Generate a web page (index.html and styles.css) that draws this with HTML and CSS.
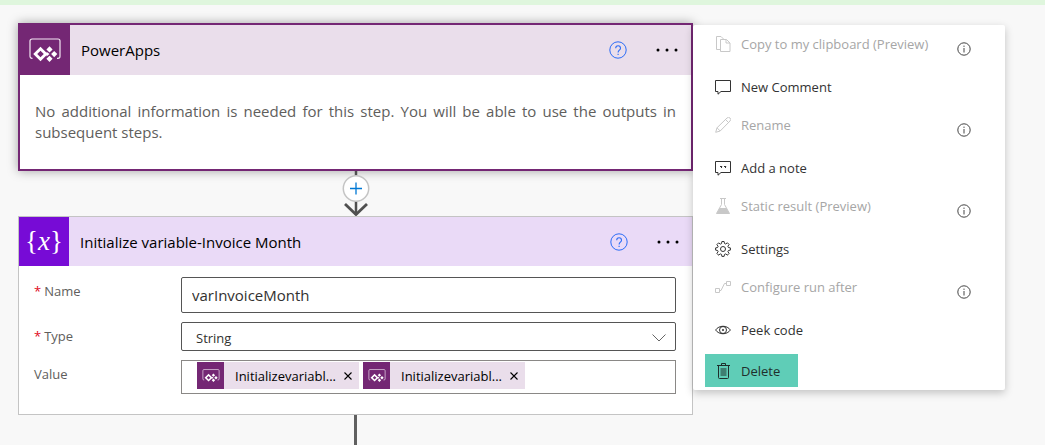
FILE: index.html
```html
<!DOCTYPE html>
<html lang="en">
<head>
<meta charset="UTF-8">
<meta name="viewport" content="width=device-width, initial-scale=1.0">
<title>Flow designer</title>
<link rel="stylesheet" href="styles.css">
</head>

<body>

<!-- shared icons -->
<svg class="sprite" aria-hidden="true">
<symbol id="powerapps" viewBox="0 0 32 24">
<path d="M3.500 20.300H3a2 2 0 0 1-2-2V3a2 2 0 0 1 2-2h26a2 2 0 0 1 2 2v15.300a2 2 0 0 1-2 2h-1" fill="none" stroke="#f3e8f3" stroke-width="1.200"/>
<path fill="#fff" fill-rule="evenodd" d="M11.500 8.700l7.300 7.300-7.300 7.300L4.200 16zM11.500 12.700L8.200 16l3.300 3.300 3.300-3.300z"/>
<path fill="#fff" d="M20.500 8.300l3.100 3.100-3.100 3.100-3.100-3.100zM25.200 13l3.100 3.100-3.100 3.100-3.100-3.100zM20.500 17.700l3.100 3.100-3.100 3.100-3.100-3.100zM17.500 13.700l3 2.400-3 2.400z"/>
</symbol>
<symbol id="help" viewBox="0 0 18 18">
<circle cx="9" cy="9" r="8.200" fill="none" stroke="#2b6cf6"/>
<path d="M6.700 7.200c0-3.200 4.800-3.200 4.800 0 0 2-2.400 2-2.400 4.300M9.100 12.700v1.300" fill="none" stroke="#2b6cf6" stroke-width="1.100"/>
</symbol>
<symbol id="dots" viewBox="0 0 24 6">
<circle cx="3" cy="3" r="1.500"/><circle cx="12" cy="3" r="1.500"/><circle cx="21" cy="3" r="1.500"/>
</symbol>
<symbol id="info" viewBox="0 0 14 14">
<circle cx="7" cy="7" r="6.200" fill="none" stroke="#444"/>
<path d="M7 6v4.500M7 3.600v1.300" stroke="#444"/>
</symbol>
<symbol id="close" viewBox="0 0 8 8">
<path d="M.5.5l7 7M7.500.5l-7 7" stroke="#000" stroke-width="1.100"/>
</symbol>
</svg>

<main class="workspace">

<div class="flow">

<section class="card selected">
<header class="card-head trigger">
<span class="tile"><svg width="32" height="24"><use href="#powerapps"/></svg></span>
<h2>PowerApps</h2>
<button class="icon-btn" aria-label="Help"><svg width="18" height="18"><use href="#help"/></svg></button>
<button class="icon-btn more" aria-label="More"><svg width="24" height="6"><use href="#dots"/></svg></button>
</header>
<p class="message">No additional information is needed for this step. You will be able to use the outputs in subsequent steps.</p>
</section>

<button class="connector" aria-label="Insert a new step">
<svg width="28" height="45" viewBox="0 0 28 45" fill="none">
<path d="M14 0v44" stroke="#505050" stroke-width="2.500"/>
<path d="M3 33l11 10.500L25 33" stroke="#505050" stroke-width="2.800"/>
<circle cx="14" cy="17.500" r="12.700" fill="#fff" stroke="#c4c4c4" stroke-width="1.500"/>
<path d="M14 11.500v12M8 17.500h12" stroke="#0078d4" stroke-width="1.300"/>
</svg>
</button>

<section class="card">
<header class="card-head variable">
<span class="tile"><span class="fx">{<i>x</i>}</span></span>
<h2>Initialize variable-Invoice Month</h2>
<button class="icon-btn" aria-label="Help"><svg width="18" height="18"><use href="#help"/></svg></button>
<button class="icon-btn more" aria-label="More"><svg width="24" height="6"><use href="#dots"/></svg></button>
</header>
<form class="fields">
<label for="name"><span class="req">*</span>Name</label>
<input id="name" class="text-input" type="text" value="varInvoiceMonth">

<label for="type"><span class="req">*</span>Type</label>
<div class="select-wrap">
<select id="type"><option>String</option></select>
<svg class="chevron" width="14" height="8" viewBox="0 0 14 8"><path d="M.5.5L7 7 13.500.5" fill="none" stroke="#666"/></svg>
</div>

<span class="label" id="valueLabel">Value</span>
<div class="tokens" role="group" aria-labelledby="valueLabel">
<span class="token"><span class="token-tile"><svg width="18" height="13"><use href="#powerapps"/></svg></span><span class="token-text">Initializevariabl...</span><button type="button" class="icon-btn" aria-label="Remove"><svg width="8" height="8"><use href="#close"/></svg></button></span>
<span class="token"><span class="token-tile"><svg width="18" height="13"><use href="#powerapps"/></svg></span><span class="token-text">Initializevariabl...</span><button type="button" class="icon-btn" aria-label="Remove"><svg width="8" height="8"><use href="#close"/></svg></button></span>
</div>
</form>
</section>

<div class="line"></div>
</div>

<ul class="menu">
<li class="locked">
<button class="item" disabled><svg width="16" height="16" viewBox="0 0 16 16"><path d="M5 13.500H1.500v-13H6l3 3M5.500 3.500h6l3.500 3.500v8.500H5.500zM11 3.500V7h4" /></svg>Copy to my clipboard (Preview)</button>
<svg class="info" width="14" height="14"><use href="#info"/></svg>
</li>
<li>
<button class="item"><svg width="16" height="16" viewBox="0 0 16 16"><path d="M.5 1.500h15v11H6l-3 2.700v-2.700H.5z"/></svg>New Comment</button>
</li>
<li class="locked">
<button class="item" disabled><svg width="16" height="16" viewBox="0 0 16 16"><path d="M.7 15.300L2 10.800 12 1a2 2 0 0 1 3 3L5.200 14zM2 10.800L5.200 14M10.500 2.500l3 3"/></svg>Rename</button>
<svg class="info" width="14" height="14"><use href="#info"/></svg>
</li>
<li>
<button class="item"><svg width="16" height="16" viewBox="0 0 16 16"><path d="M.5 1.500h15v11H6l-3 2.700v-2.700H.5z"/><path d="M5 6.500h2.200M9 6.500h2.200M6.500 6v2M10.500 6v2"/></svg>Add a note</button>
</li>
<li class="locked">
<button class="item" disabled><svg width="16" height="16" viewBox="0 0 16 16"><path d="M5 .5h6M6.500.5v6l-5 9h13l-5-9v-6"/><path class="solid" d="M4.500 10h7l3 5.500h-13z"/></svg>Static result (Preview)</button>
<svg class="info" width="14" height="14"><use href="#info"/></svg>
</li>
<li>
<button class="item"><svg width="16" height="16" viewBox="0 0 16 16"><circle cx="8" cy="8" r="2.500"/><path d="M6.900.5h2.200l.4 2 1.200.5 1.700-1.200 1.700 1.700L12.900 5.300l.5 1.200 2 .4v2.200l-2 .4-.5 1.200 1.200 1.700-1.700 1.700-1.700-1.200-1.200.5-.4 2H6.900l-.4-2-1.200-.5-1.700 1.200-1.700-1.700 1.200-1.700-.5-1.200-2-.4V6.900l2-.4.5-1.200L1.900 3.600l1.700-1.700 1.700 1.200 1.200-.5z"/></svg>Settings</button>
</li>
<li class="locked">
<button class="item" disabled><svg width="16" height="16" viewBox="0 0 16 16"><path d="M.5 9.500h4v4h-4zM11.500 2.500h4v4h-4zM4.500 11.500H6l3.500-7h2"/></svg>Configure run after</button>
<svg class="info" width="14" height="14"><use href="#info"/></svg>
</li>
<li>
<button class="item"><svg width="16" height="16" viewBox="0 0 16 16"><path d="M.6 8C4 3 12 3 15.400 8 12 13 4 13 .6 8z"/><circle cx="8" cy="8" r="3.500"/><circle cx="8" cy="8" r=".7"/></svg>Peek code</button>
</li>
<li class="last">
<button class="item delete"><svg width="16" height="16" viewBox="0 0 16 16"><path d="M2 2.500h13M6.500 2.500v-2h4v2M3.500 2.500v12q0 1 1 1h8q1 0 1-1v-12"/><path class="solid fade" d="M5.500 5h6v8h-6z"/></svg>Delete</button>
</li>
</ul>

</main>

</body>
</html>
```
FILE: styles.css
```css
*{box-sizing:border-box}
body{margin:0;font-family:"Segoe UI","Open Sans",sans-serif;font-size:15px;color:#333;
background:#f8f8f8;border-top:5px solid #dff6dd}
button{font:inherit;color:inherit;background:none;border:none;padding:0;cursor:pointer}
svg{display:block;flex:none}
.sprite{position:absolute;width:0;height:0}

.workspace{display:grid;grid-template-columns:minmax(0,1fr) 312px;align-items:start;
min-height:calc(100vh - 5px);padding:18px 40px 0 18px}
.flow{display:flex;flex-direction:column;align-self:stretch}

.card{background:#fff;border:1px solid #c4c4c4}
.card.selected{border:2px solid #742774;box-shadow:0 0 10px rgba(0,0,0,.35)}
.card-head{display:flex;align-items:center;height:49px;padding-right:12px}
.card-head h2{flex:1;margin:0;padding-left:11px;font-size:15px;font-weight:400;color:#000}
.trigger{height:50px;background:#eadeeb}
.variable{background:#eadaf7}
.tile{display:flex;align-items:center;justify-content:center;width:50px;height:100%;background:#742774}
.variable .tile{background:#770bd6}
.fx{font-family:"Liberation Serif",serif;font-size:27px;line-height:27px;color:#fff}
.icon-btn{display:flex;align-items:center;justify-content:center}
.more{margin-left:28px}

.message{margin:0;padding:26px 15px;line-height:21px;text-align:justify;color:#605e5c}
.connector{align-self:center;position:relative}
.line{flex:1;align-self:center;width:3px;background:#606060}

.fields{display:grid;grid-template-columns:147px minmax(0,1fr);row-gap:9px;padding:11px 16px 20px 15px}
.fields label,.label{padding-top:4px;font-size:13px;line-height:20px;color:#605e5c}
.req{color:#e00b1c;margin-right:3px}
.text-input{width:100%;height:36px;padding:0 10px;font:inherit;color:#323130;
background:#fff;border:1px solid #555;border-radius:2px}
.select-wrap{position:relative}
.select-wrap select{display:block;width:100%;height:29px;padding:2px 14px 0;font:inherit;font-size:13px;color:#323130;
background:#fff;border:1px solid #555;border-radius:2px;appearance:none}
.chevron{position:absolute;right:10px;top:12px;pointer-events:none}
.tokens{display:flex;gap:4px;height:34px;padding:1px 15px;border:1px solid #8a8886}
.token{display:flex;align-items:center;width:162px;height:27px;padding-right:7px;background:#eadeeb;color:#000;font-size:13px}
.token-tile{display:flex;align-items:center;justify-content:center;width:27px;height:27px;background:#742774}
.token-text{flex:1;padding-left:11px;white-space:nowrap}

.menu{position:relative;list-style:none;margin:2px 0 0;padding:3px 12px;background:#fff;border-radius:2px;
box-shadow:0 3px 8px rgba(0,0,0,.22)}
.menu li{display:flex;align-items:center;justify-content:space-between;height:40px;padding-right:22px}
.menu .locked{height:41px}
.item{display:flex;align-items:center;gap:10px;height:33px;margin-bottom:4px;padding:0 18px 0 10px;font-size:13px;white-space:nowrap}
.item svg{fill:none;stroke:currentColor}
.item .solid{fill:currentColor;stroke:none}
.item .fade{opacity:.5}
.item:disabled{color:#a6a6a6;cursor:default;margin-bottom:10px}
.item:disabled svg{color:#c8c8c8}
.menu .last{height:33px;margin-top:2px}
.delete{margin:0;background:#5fcdb7;color:#1f2f2c}
```
